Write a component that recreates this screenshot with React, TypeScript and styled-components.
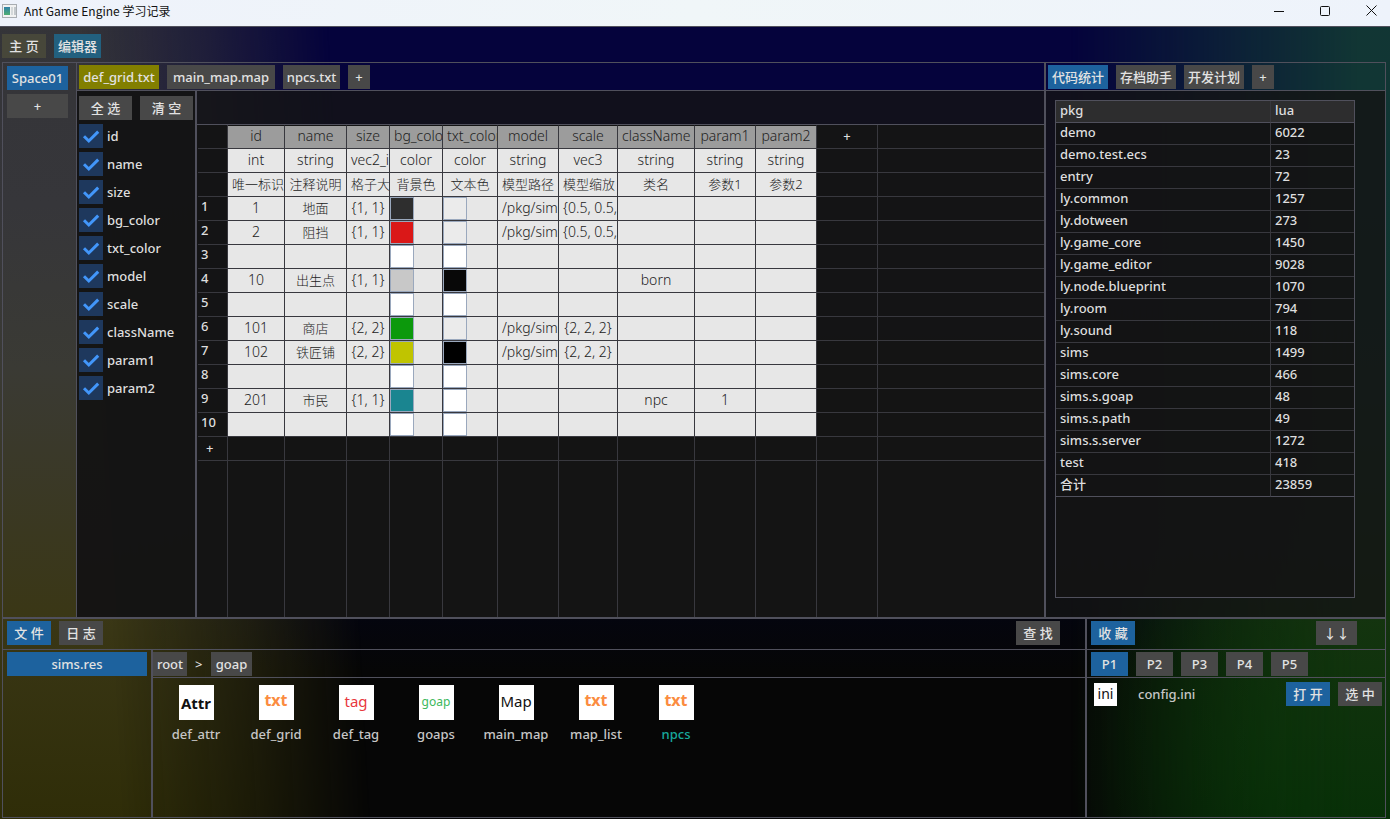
import React from "react";
import styled, { createGlobalStyle, css } from "styled-components";

const LINE = "#50505c";
const GRID_LINE = "#38383e";
const FONT = '"Noto Sans", "Noto Sans CJK SC", sans-serif';

const GlobalStyle = createGlobalStyle`
  * { box-sizing: border-box; }
  body { margin: 0; background: #060606; }
  button, input { font: inherit; margin: 0; }
`;

const App_ = styled.div`
  position: relative;
  isolation: isolate;
  display: flex;
  flex-direction: column;
  min-height: 100vh;
  font: 500 13px/20px ${FONT};
  color: #dedede;
  background:
    radial-gradient(ellipse 320px 300px at 100% 92%, #083008 35%, #08300800),
    linear-gradient(180deg, #05033c 0%, #05033c 20%, #04050f 75%, #060606 82%);

  &::before,
  &::after {
    content: "";
    position: absolute;
    inset: 0;
    z-index: -1;
  }
  &::before {
    background: linear-gradient(180deg, #343438 0%, #36363a 25%, #3a3a34 45%, #3a3716 75%, #2f2d08 100%);
    mask-image: linear-gradient(87deg, #000 120px, #0008 250px, transparent 370px);
  }
  &::after {
    background: linear-gradient(180deg, #123634 0%, #103634 20%, #14352c 45%, #14340f 75%, #083008 100%);
    mask-image: linear-gradient(270deg, #000 30px, #0009 150px, transparent 320px);
  }
`;

const TitleBar = styled.header`
  display: flex;
  align-items: center;
  height: 27px;
  padding: 0 10px 5px 2px;
  border-bottom: 1px solid ${LINE};
  background: linear-gradient(90deg, #eef2fb, #f0f6f8 50%, #eef3fb);
  color: #111;
  font: 400 12px/20px "Noto Sans CJK SC", sans-serif;
`;

const Title = styled.h1`
  flex: 1;
  margin: 0 0 0 7px;
  font: inherit;
`;

const WindowButton = styled.button`
  display: flex;
  align-items: center;
  justify-content: center;
  width: 46px;
  height: 20px;
  padding: 0;
  border: 0;
  background: none;
  color: #111;
  &:last-child { width: 17px; margin-left: 15px; }
`;

const tones = {
  gray: "#484848",
  blue: "#1d629e",
  olive: "#827f00",
  moss: "#47473a",
  teal: "#22607f",
};
type Tone = keyof typeof tones;

const Button = styled.button<{ $tone?: Tone; $w?: number }>`
  flex: none;
  height: 24px;
  padding: 0 4px;
  border: 0;
  background: ${(p) => tones[p.$tone ?? "gray"]};
  color: #e2e2e2;
  line-height: 20px;
  white-space: nowrap;
  ${(p) => p.$w && css`width: ${p.$w}px; padding: 0;`}
`;

const MainNav = styled.nav`
  display: flex;
  gap: 8px;
  padding: 7px 2px 4px;
`;

const Frame = styled.main`
  flex: 1;
  display: flex;
  flex-direction: column;
  margin: 0 4px 1px 2px;
  border: 1px solid ${LINE};
`;

const Workspace = styled.div`
  flex: 1;
  display: flex;
`;

const Spaces = styled.aside`
  display: flex;
  flex-direction: column;
  gap: 4px;
  width: 74px;
  padding: 3px 8px 0 4px;
  border-right: 1px solid ${LINE};
`;

const Column = styled.section<{ $w?: number }>`
  display: flex;
  flex-direction: column;
  min-width: 0;
  ${(p) =>
    p.$w
      ? css`flex: none; width: ${p.$w}px; border-left: 2px solid ${LINE};`
      : css`flex: 1;`}
`;

const TabBar = styled.nav<{ $left?: number }>`
  display: flex;
  gap: 8px;
  height: 28px;
  padding: 2px 2px 0 ${(p) => p.$left ?? 2}px;
  border-bottom: 1px solid ${LINE};
`;

const Editor = styled.div`
  flex: 1;
  display: flex;
`;

const Fields = styled.div`
  display: flex;
  flex-direction: column;
  gap: 4px;
  flex: none;
  width: 120px;
  padding: 5px 0 0 2px;
  border-right: 2px solid ${LINE};
  background: rgba(20, 20, 20, 0.97);
`;

const FieldActions = styled.div`
  display: flex;
  gap: 8px;
`;

const FieldLabel = styled.label`
  display: grid;
  grid-template-columns: 24px 1fr;
  column-gap: 4px;
  align-items: center;
  height: 24px;
  svg {
    grid-area: 1 / 1;
    pointer-events: none;
    visibility: hidden;
  }
  input:checked + svg { visibility: visible; }
`;

const Check = styled.input`
  appearance: none;
  grid-area: 1 / 1;
  width: 24px;
  height: 24px;
  background: #1e385d;
`;

const SheetArea = styled.div`
  flex: 1;
  display: flex;
  flex-direction: column;
  min-width: 0;
`;

const SheetTools = styled.div`
  height: 34px;
  border-bottom: 1px solid ${LINE};
  background: rgba(20, 20, 20, 0.8);
`;

const Sheet = styled.table`
  flex: 1;
  width: 100%;
  padding-left: 1px;
  table-layout: fixed;
  border-spacing: 0;
  background: rgba(20, 20, 20, 0.98);
`;

const cellBase = css`
  height: 24px;
  padding: 0 4px 2px;
  border-right: 1px solid ${GRID_LINE};
  border-bottom: 1px solid ${GRID_LINE};
  overflow: hidden;
  white-space: nowrap;
  text-align: center;
  line-height: 20px;
  font-weight: 300;
  color: #222;
`;

const HeadCell = styled.th`
  ${cellBase}
  border-top: 1px solid #141414;
  background: #9c9c9c;
  font-size: 14px;
`;

const Cell = styled.td<{ $han?: boolean }>`
  ${cellBase}
  background: #e7e7e7;
  font-size: ${(p) => (p.$han ? 13 : 14)}px;
`;

const DarkCell = styled.td<{ $open?: boolean; $last?: boolean; $start?: boolean }>`
  ${cellBase}
  height: ${(p) => (p.$open ? "auto" : "24px")};
  border-bottom-width: ${(p) => (p.$open ? 0 : 1)}px;
  border-right-width: ${(p) => (p.$last ? 0 : 1)}px;
  text-align: ${(p) => (p.$start ? "left" : "center")};
  color: #dedede;
  font-weight: 500;
`;

const RowNumber = styled.th`
  ${cellBase}
  padding: 0 3px 5px;
  text-align: left;
  line-height: 18px;
  color: #dedede;
  font-weight: 500;
`;

const SwatchCell = styled(Cell)`
  padding: 0;
`;

const Swatch = styled.input`
  appearance: none;
  display: block;
  width: 24px;
  height: 23px;
  padding: 0;
  border: 1px solid #9aa8bd;
  background: none;
  &::-webkit-color-swatch-wrapper { padding: 0; }
  &::-webkit-color-swatch { border: 0; border-radius: 0; }
`;

const PlainButton = styled.button`
  height: 20px;
  padding: 0 4px;
  border: 0;
  background: none;
  color: inherit;
  line-height: 20px;
`;

const StatsPane = styled.div`
  flex: 1;
  display: flex;
  padding: 9px 30px 19px 9px;
  background: rgba(20, 20, 20, 0.8);
`;

const StatsBox = styled.div`
  flex: 1;
  border: 1px solid ${LINE};
  background: rgba(20, 20, 20, 0.8);
`;

const Stats = styled.table`
  width: 100%;
  table-layout: fixed;
  border-spacing: 0;
  text-align: left;
  th, td {
    height: 22px;
    padding: 0 4px 3px;
    border-bottom: 1px solid ${GRID_LINE};
    font-weight: 500;
    line-height: 18px;
  }
  th:first-child, td:first-child { border-right: 1px solid ${GRID_LINE}; }
  th { background: #2d2d2e; border-bottom-color: ${LINE}; }
  tr:last-child td { border-bottom-color: ${LINE}; }
`;

const Dock = styled.div`
  display: flex;
  height: 200px;
  border-top: 2px solid ${LINE};
`;

const DockBar = styled.nav<{ $right: number }>`
  display: flex;
  gap: 8px;
  height: 31px;
  padding: 2px ${(p) => p.$right}px 0 4px;
  border-bottom: 1px solid ${LINE};
  > :last-child { margin-left: auto; }
`;

const DockBody = styled.div`
  flex: 1;
  display: flex;
`;

const Packages = styled.div`
  width: 150px;
  padding: 2px 4px;
  border-right: 2px solid ${LINE};
  button { width: 100%; }
`;

const Browser = styled.div`
  flex: 1;
`;

const Crumb = styled.span`
  width: 8px;
  line-height: 24px;
`;

const Files = styled.div`
  display: flex;
  padding: 7px 3px;
`;

const File = styled.button<{ $active?: boolean }>`
  display: flex;
  flex-direction: column;
  align-items: center;
  gap: 4px;
  width: 80px;
  padding: 0;
  border: 0;
  background: none;
  line-height: 20px;
  color: ${(p) => (p.$active ? "#18a89c" : "#c6c6c6")};
`;

const FileIcon = styled.span<{ $color: string; $bold?: boolean; $font: number; $size?: number; $raise?: number }>`
  flex: none;
  display: flex;
  align-items: center;
  justify-content: center;
  width: ${(p) => p.$size ?? 35}px;
  height: ${(p) => p.$size ?? 35}px;
  padding-bottom: ${(p) => p.$raise ?? 0}px;
  background: #fff;
  color: ${(p) => p.$color};
  font-size: ${(p) => p.$font}px;
  font-weight: ${(p) => (p.$bold ? 700 : 400)};
`;

const FileName = styled.span`
  line-height: 20px;
`;

const Favorite = styled.div`
  display: flex;
  align-items: center;
  gap: 8px;
  padding: 4px 3px 0 7px;
`;

const FavoriteName = styled.span`
  flex: 1;
  padding-left: 13px;
  color: #c6c6c6;
`;

const fields = ["id", "name", "size", "bg_color", "txt_color", "model", "scale", "className", "param1", "param2"];
const types = ["int", "string", "vec2_int", "color", "color", "string", "vec3", "string", "string", "string"];
const notes = ["唯一标识", "注释说明", "格子大小", "背景色", "文本色", "模型路径", "模型缩放", "类名", "参数1", "参数2"];
const widths = [30, 57, 62, 43, 53, 55, 61, 59, 77, 61, 61, 61];
const isHan = (text: string) => /[\u4e00-\u9fff]/.test(text);

const path = "/pkg/sims";
const rows: string[][] = [
  ["1", "地面", "{1, 1}", "#2e2e2e", "#ebebeb", path, "{0.5, 0.5, 0.5}", "", "", ""],
  ["2", "阻挡", "{1, 1}", "#da1818", "#ebebeb", path, "{0.5, 0.5, 0.5}", "", "", ""],
  ["", "", "", "#ffffff", "#ffffff", "", "", "", "", ""],
  ["10", "出生点", "{1, 1}", "#c8c8c8", "#080808", "", "", "born", "", ""],
  ["", "", "", "#ffffff", "#ffffff", "", "", "", "", ""],
  ["101", "商店", "{2, 2}", "#0c990c", "#ebebeb", path, "{2, 2, 2}", "", "", ""],
  ["102", "铁匠铺", "{2, 2}", "#c0c400", "#000000", path, "{2, 2, 2}", "", "", ""],
  ["", "", "", "#ffffff", "#ffffff", "", "", "", "", ""],
  ["201", "市民", "{1, 1}", "#1a8590", "#ffffff", "", "", "npc", "1", ""],
  ["", "", "", "#ffffff", "#ffffff", "", "", "", "", ""],
];

const stats: [string, number][] = [
  ["demo", 6022],
  ["demo.test.ecs", 23],
  ["entry", 72],
  ["ly.common", 1257],
  ["ly.dotween", 273],
  ["ly.game_core", 1450],
  ["ly.game_editor", 9028],
  ["ly.node.blueprint", 1070],
  ["ly.room", 794],
  ["ly.sound", 118],
  ["sims", 1499],
  ["sims.core", 466],
  ["sims.s.goap", 48],
  ["sims.s.path", 49],
  ["sims.s.server", 1272],
  ["test", 418],
  ["合计", 23859],
];

const files = [
  { name: "def_attr", tag: "Attr", color: "#111", bold: true, font: 15 },
  { name: "def_grid", tag: "txt", color: "#fb8c40", bold: true, font: 16, raise: 6 },
  { name: "def_tag", tag: "tag", color: "#e8383e", font: 15, raise: 4 },
  { name: "goaps", tag: "goap", color: "#3cb85c", font: 12, raise: 2 },
  { name: "main_map", tag: "Map", color: "#111", font: 15, raise: 4 },
  { name: "map_list", tag: "txt", color: "#fb8c40", bold: true, font: 16, raise: 6 },
  { name: "npcs", tag: "txt", color: "#fb8c40", bold: true, font: 16, raise: 6, active: true },
];

const AppIcon = () => (
  <svg width="15" height="14" viewBox="0 0 15 14" aria-hidden="true">
    <defs>
      <linearGradient id="screen" x1="0" y1="0" x2="0" y2="1">
        <stop offset="0" stopColor="#2f80a8" />
        <stop offset="1" stopColor="#4fae72" />
      </linearGradient>
    </defs>
    <rect x="0.5" y="0.5" width="14" height="13" fill="#f2f2f2" stroke="#a9adb2" />
    <rect x="2" y="3" width="6" height="8" fill="url(#screen)" />
    <rect x="9" y="3" width="2" height="8" fill="#d4d8da" />
    <rect x="12" y="3" width="2" height="8" fill="#c3c8cc" />
  </svg>
);

const FieldCheck = ({ name }: { name: string }) => (
  <FieldLabel>
    <Check type="checkbox" defaultChecked />
    <svg width="24" height="24" viewBox="0 0 24 24" fill="none" stroke="#4296fa" strokeWidth="3">
      <path d="M5 12.2 L9.8 17 L19.2 7.6" />
    </svg>
    <span>{name}</span>
  </FieldLabel>
);

const DarkTail = () => (
  <>
    <DarkCell />
    <DarkCell $last />
  </>
);

const DataSheet = () => (
  <Sheet>
    <colgroup>
      {widths.map((w, i) => (
        <col key={i} width={w} />
      ))}
      <col />
    </colgroup>
    <thead>
      <tr>
        <DarkCell />
        {fields.map((f) => (
          <HeadCell key={f} scope="col">{f}</HeadCell>
        ))}
        <DarkCell>
          <PlainButton aria-label="添加列">+</PlainButton>
        </DarkCell>
        <DarkCell $last />
      </tr>
      {[types, notes].map((line, r) => (
        <tr key={r}>
          <DarkCell />
          {line.map((t, i) => (
            <Cell key={i} $han={isHan(t)}>{t}</Cell>
          ))}
          <DarkTail />
        </tr>
      ))}
    </thead>
    <tbody>
      {rows.map((row, r) => (
        <tr key={r}>
          <RowNumber scope="row">{r + 1}</RowNumber>
          {row.map((value, i) =>
            types[i] === "color" ? (
              <SwatchCell key={i}>
                <Swatch type="color" defaultValue={value} aria-label={`${fields[i]} ${r + 1}`} />
              </SwatchCell>
            ) : (
              <Cell key={i} $han={isHan(value)}>{value}</Cell>
            )
          )}
          <DarkTail />
        </tr>
      ))}
      <tr>
        <DarkCell $start>
          <PlainButton aria-label="添加行">+</PlainButton>
        </DarkCell>
        {fields.map((f) => (
          <DarkCell key={f} />
        ))}
        <DarkTail />
      </tr>
      <tr>
        {widths.map((_, i) => (
          <DarkCell key={i} $open />
        ))}
        <DarkCell $open $last />
      </tr>
    </tbody>
  </Sheet>
);

export default function App() {
  return (
    <App_>
      <GlobalStyle />
      <TitleBar>
        <AppIcon />
        <Title>Ant Game Engine 学习记录</Title>
        <WindowButton aria-label="Minimize">
          <svg width="10" height="10" viewBox="0 0 10 10" stroke="currentColor"><path d="M0 5.5H10" /></svg>
        </WindowButton>
        <WindowButton aria-label="Maximize">
          <svg width="10" height="10" viewBox="0 0 10 10" fill="none" stroke="currentColor">
            <rect x="0.5" y="0.5" width="9" height="9" rx="1" />
          </svg>
        </WindowButton>
        <WindowButton aria-label="Close">
          <svg width="11" height="11" viewBox="0 0 11 11" stroke="currentColor"><path d="M0.5 0.5L10.5 10.5M10.5 0.5L0.5 10.5" /></svg>
        </WindowButton>
      </TitleBar>

      <MainNav>
        <Button $tone="moss" $w={44}>主 页</Button>
        <Button $tone="teal" $w={47}>编辑器</Button>
      </MainNav>

      <Frame>
        <Workspace>
          <Spaces>
            <Button $tone="blue" $w={61}>Space01</Button>
            <Button $w={61}>+</Button>
          </Spaces>

          <Column>
            <TabBar>
              <Button $tone="olive" $w={80}>def_grid.txt</Button>
              <Button $w={108}>main_map.map</Button>
              <Button $w={57}>npcs.txt</Button>
              <Button $w={22}>+</Button>
            </TabBar>
            <Editor>
              <Fields>
                <FieldActions>
                  <Button $w={53}>全 选</Button>
                  <Button $w={53}>清 空</Button>
                </FieldActions>
                {fields.map((f) => (
                  <FieldCheck key={f} name={f} />
                ))}
              </Fields>
              <SheetArea>
                <SheetTools />
                <DataSheet />
              </SheetArea>
            </Editor>
          </Column>

          <Column $w={341}>
            <TabBar>
              <Button $tone="blue" $w={60}>代码统计</Button>
              <Button $w={60}>存档助手</Button>
              <Button $w={60}>开发计划</Button>
              <Button $w={22}>+</Button>
            </TabBar>
            <StatsPane>
              <StatsBox>
                <Stats>
                  <colgroup>
                    <col />
                    <col width="83" />
                  </colgroup>
                  <thead>
                    <tr>
                      <th scope="col">pkg</th>
                      <th scope="col">lua</th>
                    </tr>
                  </thead>
                  <tbody>
                    {stats.map(([pkg, lua]) => (
                      <tr key={pkg}>
                        <td>{pkg}</td>
                        <td>{lua}</td>
                      </tr>
                    ))}
                  </tbody>
                </Stats>
              </StatsBox>
            </StatsPane>
          </Column>
        </Workspace>

        <Dock>
          <Column>
            <DockBar $right={25}>
              <Button $tone="blue" $w={44}>文 件</Button>
              <Button $w={44}>日 志</Button>
              <Button $w={44}>查 找</Button>
            </DockBar>
            <DockBody>
              <Packages>
                <Button $tone="blue">sims.res</Button>
              </Packages>
              <Browser>
                <TabBar $left={0}>
                  <Button $w={34}>root</Button>
                  <Crumb>&gt;</Crumb>
                  <Button $w={41}>goap</Button>
                </TabBar>
                <Files>
                  {files.map((f) => (
                    <File key={f.name} $active={f.active}>
                      <FileIcon $color={f.color} $bold={f.bold} $font={f.font} $raise={f.raise}>{f.tag}</FileIcon>
                      <FileName>{f.name}</FileName>
                    </File>
                  ))}
                </Files>
              </Browser>
            </DockBody>
          </Column>

          <Column $w={300}>
            <DockBar $right={28}>
              <Button $tone="blue" $w={44}>收 藏</Button>
              <Button $w={41}>↓↓</Button>
            </DockBar>
            <TabBar $left={4}>
              {["P1", "P2", "P3", "P4", "P5"].map((p, i) => (
                <Button key={p} $tone={i === 0 ? "blue" : "gray"} $w={37}>{p}</Button>
              ))}
            </TabBar>
            <Favorite>
              <FileIcon $color="#111" $font={14} $size={23}>ini</FileIcon>
              <FavoriteName>config.ini</FavoriteName>
              <Button $tone="blue" $w={44}>打 开</Button>
              <Button $w={44}>选 中</Button>
            </Favorite>
          </Column>
        </Dock>
      </Frame>
    </App_>
  );
}
